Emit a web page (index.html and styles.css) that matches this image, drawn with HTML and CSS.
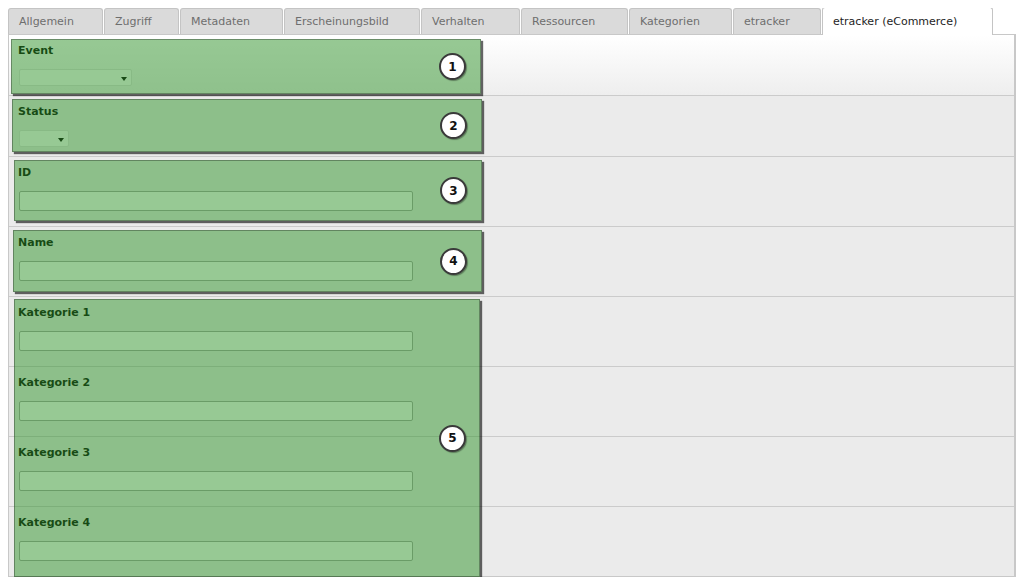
FILE: index.html
```html
<!DOCTYPE html>
<html lang="de">
<head>
<meta charset="utf-8">
<title>etracker (eCommerce)</title>
<link rel="stylesheet" href="styles.css">
</head>
<body>
<div class="tabs">
  <div class="tab tab-allgemein">Allgemein</div>
  <div class="tab tab-zugriff">Zugriff</div>
  <div class="tab tab-metadaten">Metadaten</div>
  <div class="tab tab-erscheinung">Erscheinungsbild</div>
  <div class="tab tab-verhalten">Verhalten</div>
  <div class="tab tab-ressourcen">Ressourcen</div>
  <div class="tab tab-kategorien">Kategorien</div>
  <div class="tab tab-etracker">etracker</div>
  <div class="tab tab-ecommerce active">etracker (eCommerce)</div>
</div>
<div class="panel">
  <div class="row row-first select-row">
    <div class="label">Event</div>
    <div class="select select-wide"><span class="arrow"></span></div>
  </div>
  <div class="row select-row">
    <div class="label">Status</div>
    <div class="select select-narrow"><span class="arrow"></span></div>
  </div>
  <div class="row">
    <div class="label">ID</div>
    <div class="input"></div>
  </div>
  <div class="row">
    <div class="label">Name</div>
    <div class="input"></div>
  </div>
  <div class="row">
    <div class="label">Kategorie 1</div>
    <div class="input"></div>
  </div>
  <div class="row">
    <div class="label">Kategorie 2</div>
    <div class="input"></div>
  </div>
  <div class="row">
    <div class="label">Kategorie 3</div>
    <div class="input"></div>
  </div>
  <div class="row row-last">
    <div class="label">Kategorie 4</div>
    <div class="input"></div>
  </div>

  <div class="mark mark-1"><span class="num">1</span></div>
  <div class="mark mark-2"><span class="num">2</span></div>
  <div class="mark mark-3"><span class="num">3</span></div>
  <div class="mark mark-4"><span class="num">4</span></div>
  <div class="mark mark-5"><span class="num">5</span></div>
</div>
</body>
</html>
```
FILE: styles.css
```css
html, body {
  margin: 0;
  padding: 0;
  background: #ffffff;
}
body {
  margin: 8px;
  font-family: Verdana, "DejaVu Sans", sans-serif;
  font-size: 11px;
  color: #000;
}

/* Tabs */
.tabs {
  display: flex;
  align-items: flex-end;
  height: 26px;
}
.tab {
  box-sizing: border-box;
  height: 26px;
  line-height: 25px;
  padding: 0 0 0 10px;
  margin-right: 1px;
  background: #dadada;
  border: 1px solid #c4c4c4;
  border-bottom: none;
  border-radius: 3px 3px 0 0;
  color: #6e6e6e;
  white-space: nowrap;
}
.tab-allgemein { width: 95px; }
.tab-zugriff { width: 75px; }
.tab-metadaten { width: 103px; }
.tab-erscheinung { width: 136px; }
.tab-verhalten { width: 99px; }
.tab-ressourcen { width: 107px; }
.tab-kategorien { width: 103px; }
.tab-etracker { width: 88px; }
.tab-ecommerce { width: 171px; }
.tab.active {
  height: 28px;
  line-height: 27px;
  margin-bottom: -1px;
  background: #ffffff;
  color: #1e1e1e;
  position: relative;
  z-index: 2;
}

/* Panel */
.panel {
  position: relative;
  border: 1px solid #c8c8c8;
  border-right-width: 2px;
  background: #ebebeb;
}
.row {
  padding: 8px 9px 15px;
  border-bottom: 1px solid #cbcbcb;
  background: #ebebeb;
}
.row-first {
  background: linear-gradient(#ffffff, #eeeeee);
}
.row-last {
  border-bottom: none;
}
.select-row {
  padding-bottom: 9px;
}
.label {
  font-weight: bold;
  line-height: 16px;
  margin-bottom: 10px;
}
.input {
  box-sizing: border-box;
  width: 394px;
  height: 20px;
  margin-left: 1px;
  background: #ffffff;
  border: 1px solid #a4a4a4;
  border-radius: 2px;
}
.select {
  box-sizing: border-box;
  height: 17px;
  margin-left: 1px;
  background: #ffffff;
  border: 1px solid #e0e0e0;
  border-radius: 2px;
  display: flex;
  align-items: center;
  justify-content: flex-end;
  padding-right: 4px;
}
.select-wide { width: 113px; }
.select-narrow { width: 50px; }
.arrow {
  width: 0;
  height: 0;
  border-left: 3.5px solid transparent;
  border-right: 3.5px solid transparent;
  border-top: 4px solid #000;
  margin-top: 2px;
}

/* Annotation overlays */
.mark {
  position: absolute;
  box-sizing: border-box;
  background: rgba(47, 147, 41, 0.5);
  border: 1px solid rgba(0, 0, 0, 0.3);
  box-shadow: 2px 2px 1px rgba(0, 0, 0, 0.6);
  display: flex;
  align-items: center;
  justify-content: flex-end;
  padding-right: 14px;
  z-index: 3;
}
.mark-1 { left: 2px; top: 4px; width: 470px; height: 55px; }
.mark-2 { left: 3px; top: 64px; width: 470px; height: 53px; }
.mark-3 { left: 5px; top: 125px; width: 468px; height: 61px; }
.mark-4 { left: 4px; top: 195px; width: 469px; height: 62px; }
.mark-5 { left: 5px; top: 264px; width: 466px; height: 278px; padding-right: 13px; }

.num {
  box-sizing: border-box;
  width: 27px;
  height: 27px;
  border-radius: 50%;
  background: #ffffff;
  border: 2px solid #3a3a3a;
  box-shadow: 1px 1px 1px rgba(0, 0, 0, 0.35);
  display: flex;
  align-items: center;
  justify-content: center;
  font-weight: bold;
  font-size: 12px;
  color: #111;
}
```
